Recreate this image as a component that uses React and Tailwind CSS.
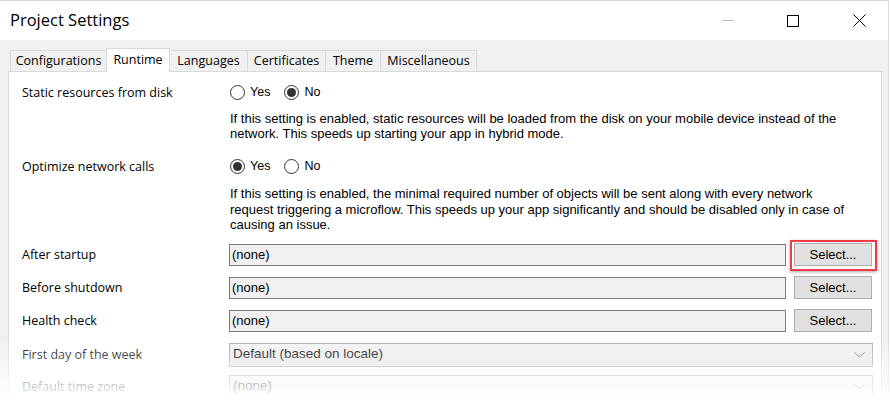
import React from 'react';

const ui = { fontFamily: '"Segoe UI", "Open Sans", "Noto Sans", sans-serif' };
const arial = { fontFamily: '"Liberation Sans", Arial, sans-serif' };

const tabs = [
  { name: 'Configurations', w: 'w-[97px]' },
  { name: 'Runtime', w: 'w-[64px]', active: true },
  { name: 'Languages', w: 'w-[79px]' },
  { name: 'Certificates', w: 'w-[79px]' },
  { name: 'Theme', w: 'w-[56px]' },
  { name: 'Miscellaneous', w: 'w-[97px]' },
];

function Radio({ checked, label }) {
  return (
    <label className="flex items-center gap-[5px]">
      <span className="w-[15px] h-[15px] rounded-full border border-[#333] bg-white flex items-center justify-center">
        {checked && <span className="w-[9px] h-[9px] rounded-full bg-[#333]" />}
      </span>
      <span className="text-[12.5px] text-black" style={arial}>{label}</span>
    </label>
  );
}

function Label({ children }) {
  return (
    <div className="w-[207px] shrink-0 pt-[2px] text-[12.5px] text-black" style={ui}>
      {children}
    </div>
  );
}

function SelectRow({ label, highlight }) {
  return (
    <div className="flex items-center h-[22px]">
      <Label>{label}</Label>
      <div
        className="w-[557px] h-[22px] border border-[#7a7a7a] bg-[#f0f0f0] flex items-center px-[2px] text-[13px] text-black"
        style={arial}
      >
        (none)
      </div>
      <div className="relative ml-[8px]">
        <button
          className="w-[78px] h-[23px] border border-[#adadad] bg-[#e1e1e1] text-[13px] text-black flex items-center justify-center"
          style={arial}
        >
          Select...
        </button>
        {highlight && (
          <span className="absolute -left-[4px] -right-[5px] -top-[3px] -bottom-[5px] border-2 border-[#ee3b45] shadow-[0_1px_3px_rgba(0,0,0,0.35)]" />
        )}
      </div>
    </div>
  );
}

function Dropdown({ label, value }) {
  return (
    <div className="flex items-center h-[24px]">
      <Label>{label}</Label>
      <div
        className="w-[644px] h-[24px] border border-[#acacac] bg-linear-to-b from-[#f2f2f2] to-[#e5e5e5] flex items-center justify-between pl-[3px] pr-[7px] text-[13.5px] text-black"
        style={arial}
      >
        <span>{value}</span>
        <svg width="11" height="6" viewBox="0 0 11 6">
          <polyline points="0.5,0.5 5.5,5 10.5,0.5" fill="none" stroke="#7a7a7a" strokeWidth="1" />
        </svg>
      </div>
    </div>
  );
}

export default function App() {
  return (
    <div className="relative w-[890px] h-[407px] overflow-hidden bg-white">
      <div className="w-[889px] h-full flex flex-col border-t border-r border-[#d9d9d9]">
        {/* Title bar */}
        <div className="h-[39px] shrink-0 bg-white flex items-center justify-between pl-[10px] pr-[22px]">
          <span className="text-[16.5px] text-black" style={ui}>Project Settings</span>
          <div className="flex items-center h-full">
            <span className="block w-[12px] h-px bg-[#bcbcbc]" />
            <span className="block ml-[53px] w-[12px] h-[12px] border border-black" />
            <svg className="ml-[54px]" width="13" height="13" viewBox="0 0 13 13">
              <path d="M0.5 0.5 L12.5 12.5 M12.5 0.5 L0.5 12.5" stroke="black" strokeWidth="1" />
            </svg>
          </div>
        </div>

        {/* Body */}
        <div className="flex-1 bg-[#f0f0f0] flex flex-col pt-[8px] pl-[8px] pr-[6px]">
          <div className="flex items-end h-[23px] pl-[2px]">
            {tabs.map((t) => (
              <div
                key={t.name}
                className={
                  t.active
                    ? `${t.w} -ml-px first:ml-0 h-[24px] -mb-px relative z-10 bg-white border border-b-0 border-[#d9d9d9] flex items-start justify-center pt-[2px] text-[12.5px] text-black`
                    : `${t.w} -ml-px first:ml-0 h-[21px] bg-[#f0f0f0] border border-b-0 border-[#d9d9d9] flex items-center justify-center pt-px text-[12.5px] text-black`
                }
                style={ui}
              >
                {t.name}
              </div>
            ))}
          </div>

          {/* Panel */}
          <div className="flex-1 bg-white border border-[#d9d9d9] pt-[10px] pl-[13px]">
            <div className="flex items-center h-[20px]">
              <Label>Static resources from disk</Label>
              <div className="flex items-center gap-[14px] pl-px">
                <Radio label="Yes" />
                <Radio label="No" checked />
              </div>
            </div>
            <p className="ml-[208px] mt-[9px] text-[13px] leading-[15px] text-black" style={arial}>
              If this setting is enabled, static resources will be loaded from the disk on your mobile device instead of the
              <br />
              network. This speeds up starting your app in hybrid mode.
            </p>

            <div className="flex items-center h-[20px] mt-[15px]">
              <Label>Optimize network calls</Label>
              <div className="flex items-center gap-[14px] pl-px">
                <Radio label="Yes" checked />
                <Radio label="No" />
              </div>
            </div>
            <p className="ml-[208px] mt-[10px] text-[13px] leading-[15.5px] text-black" style={arial}>
              If this setting is enabled, the minimal required number of objects will be sent along with every network
              <br />
              request triggering a microflow. This speeds up your app significantly and should be disabled only in case of
              <br />
              causing an issue.
            </p>

            <div className="mt-[11px] flex flex-col gap-[11px]">
              <SelectRow label="After startup" highlight />
              <SelectRow label="Before shutdown" />
              <SelectRow label="Health check" />
              <Dropdown label="First day of the week" value="Default (based on locale)" />
            </div>
            <div className="mt-[8px]">
              <Dropdown label="Default time zone" value="(none)" />
            </div>
          </div>
        </div>
      </div>

      {/* bottom fade */}
      <div className="absolute left-0 right-0 top-[338px] bottom-0 bg-linear-to-b from-white/0 to-white to-90% pointer-events-none" />
    </div>
  );
}
